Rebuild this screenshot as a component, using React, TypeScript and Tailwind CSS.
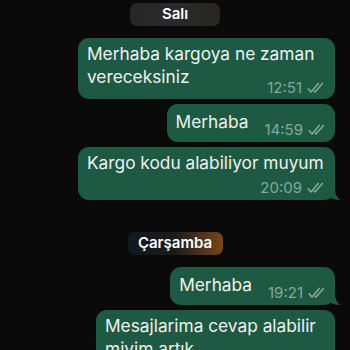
import React from 'react';

const font = { fontFamily: 'Inter, "Liberation Sans", sans-serif' };

function Ticks() {
  return (
    <svg width="18" height="12" viewBox="0 0 18 12" fill="none" stroke="currentColor" strokeWidth="1.6" strokeLinecap="round" strokeLinejoin="round">
      <path d="M1.2 6.8 L4 10 L11.2 1.4" />
      <path d="M7.2 9.2 L8 10 L15.4 1.4" />
    </svg>
  );
}

function Time({ value }: { value: string }) {
  return (
    <span className="flex items-center gap-[5px] text-[15px] leading-[14px] text-[#86a898] whitespace-nowrap">
      {value}
      <Ticks />
    </span>
  );
}

function Tail() {
  return (
    <svg className="absolute -right-[6px] bottom-0" width="12" height="12" viewBox="0 0 12 12">
      <path d="M0 0 L6 0 C6 6 8 10 12 12 C7 12 3 11 0 9 Z" fill="#1e5a43" />
    </svg>
  );
}

type Msg = {
  text: string;
  time: string;
  mode: 'inline' | 'overlap' | 'below';
  width?: string;
  tail?: boolean;
};

function Bubble({ m }: { m: Msg }) {
  return (
    <div className={`relative self-end rounded-[11px] bg-[#1e5a43] px-[9px] ${m.width ?? ''}`}>
      {m.mode === 'inline' && (
        <div className="flex items-end gap-[16px] pt-[6px] pb-[9px]">
          <span className="text-[17.3px] leading-[23px] text-[#eef2ef]">{m.text}</span>
          <span className="-mb-[4px]">
            <Time value={m.time} />
          </span>
        </div>
      )}
      {m.mode === 'overlap' && (
        <div className="pt-[4px] pb-[4px]">
          <p className="text-[17.3px] leading-[23px] text-[#eef2ef]">{m.text}</p>
          <div className="-mt-[7px] flex justify-end pr-[1px]">
            <Time value={m.time} />
          </div>
        </div>
      )}
      {m.mode === 'below' && (
        <div className="pt-[4px] pb-[5px]">
          <p className="text-[17.3px] leading-[23px] text-[#eef2ef]">{m.text}</p>
          <div className="mt-[7px] flex justify-end pr-[1px]">
            <Time value={m.time} />
          </div>
        </div>
      )}
      {m.tail && <Tail />}
    </div>
  );
}

function DatePill({ label, warm }: { label: string; warm?: boolean }) {
  return (
    <div className="flex justify-center">
      <div
        className={`flex h-[23px] items-center justify-center rounded-[7px] text-[15px] font-semibold text-white ${
          warm
            ? 'w-[95px] bg-gradient-to-r from-[#141820] via-[#1a1a1c] via-50% to-[#7a4712]'
            : 'w-[90px] bg-gradient-to-r from-[#262626] via-[#2a2a2a] to-[#27261f]'
        }`}
      >
        {label}
      </div>
    </div>
  );
}

export default function App() {
  return (
    <div className="h-[350px] w-[350px] overflow-hidden bg-[#0a0a0a]" style={font}>
      <div className="flex flex-col pt-[3px]">
        <DatePill label="Salı" />
        <div className="mt-[12px] flex flex-col gap-[5px] pr-[15px]">
          <Bubble m={{ text: 'Merhaba kargoya ne zaman vereceksiniz', time: '12:51', mode: 'overlap', width: 'w-[257px]' }} />
          <Bubble m={{ text: 'Merhaba', time: '14:59', mode: 'inline' }} />
          <Bubble m={{ text: 'Kargo kodu alabiliyor muyum', time: '20:09', mode: 'below', width: 'w-[257px]', tail: true }} />
        </div>
        <div className="mt-[32px]">
          <DatePill label="Çarşamba" warm />
        </div>
        <div className="mt-[12px] flex flex-col gap-[5px] pr-[15px]">
          <Bubble m={{ text: 'Merhaba', time: '19:21', mode: 'inline', tail: true }} />
          <Bubble m={{ text: 'Mesajlarima cevap alabilir miyim artık', time: '19:22', mode: 'below', width: 'w-[239px]', tail: true }} />
        </div>
      </div>
    </div>
  );
}
